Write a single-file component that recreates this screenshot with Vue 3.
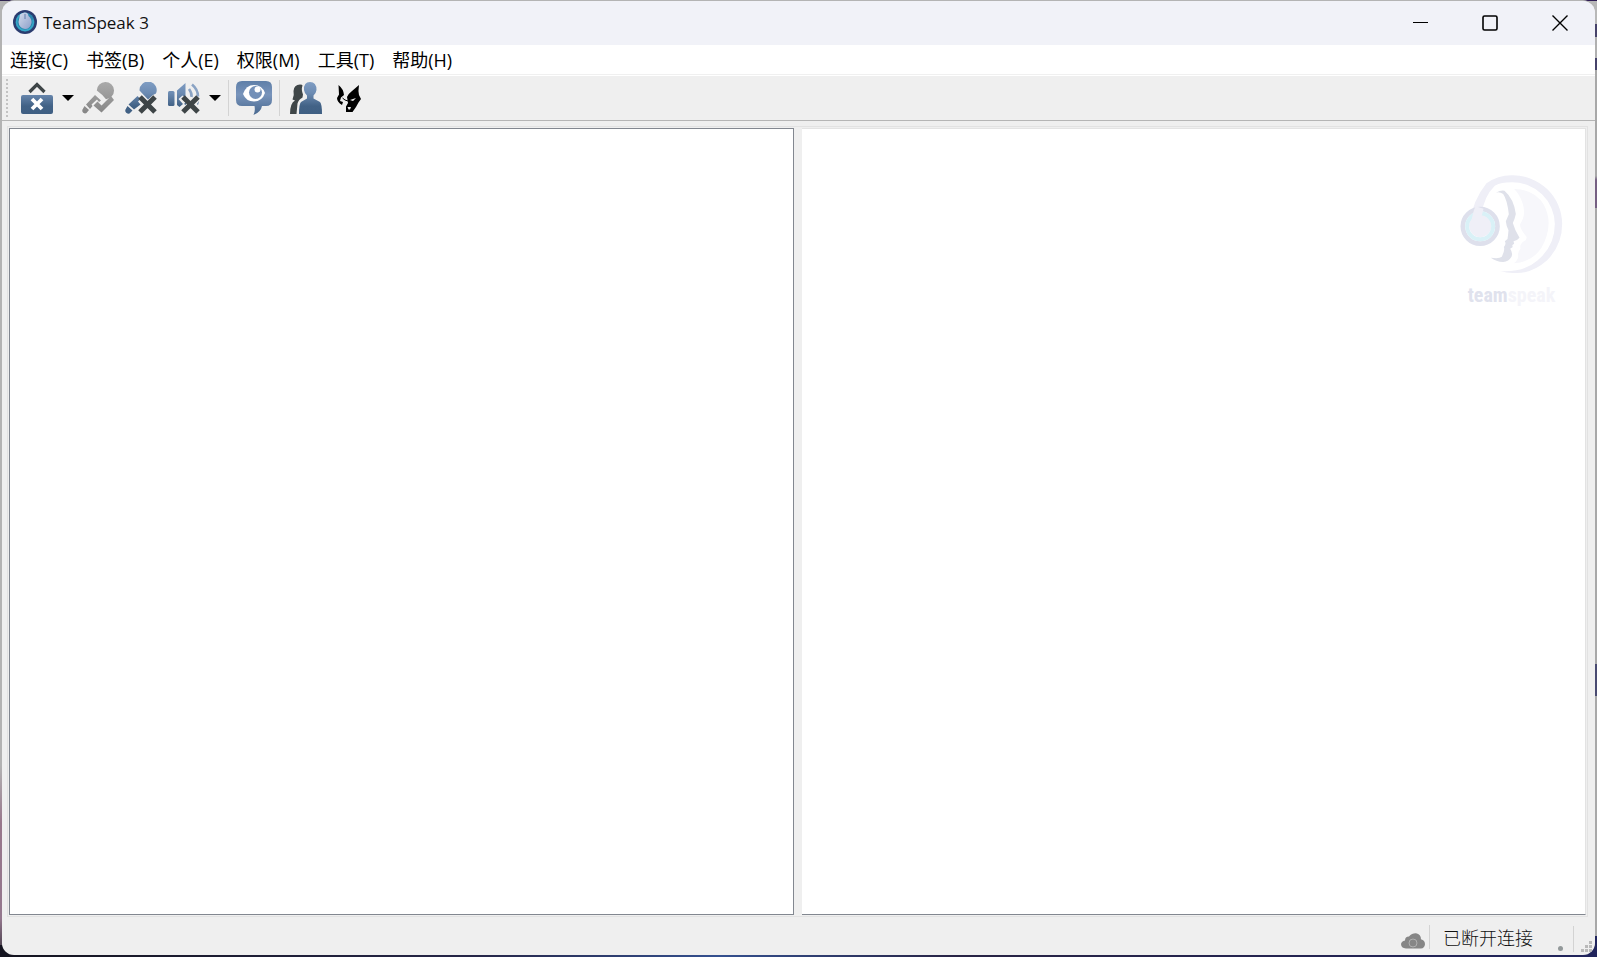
<template>
  <div class="desktop">
    <div class="window">
      <header class="titlebar">
        <svg class="app-icon" viewBox="0 0 24 24">
          <defs>
            <linearGradient id="app-face" x1="0" y1="0" x2="1" y2="1">
              <stop offset="0" stop-color="#d3dcec" />
              <stop offset="1" stop-color="#8d9fca" />
            </linearGradient>
          </defs>
          <circle cx="12" cy="12" r="12" fill="#2b3c70" />
          <circle cx="12" cy="12" r="9.500" fill="#2b87ae" />
          <path d="M12 3.600a8.400 8.400 0 1 0 8 6" fill="none" stroke="#37a8c9" stroke-width="1.500" />
          <path
            d="M7 4.500Q12 1 15 4L15.500 6Q19 9 18.500 13Q17 19 12 19Q6 18 5.500 12Z"
            fill="url(#app-face)"
          />
          <path d="M12 4v5" stroke="#5e7cab" stroke-width="1" />
        </svg>
        <h1 class="title">TeamSpeak 3</h1>
        <div class="window-controls">
          <button type="button" aria-label="最小化">
            <svg viewBox="0 0 16 16"><path d="M1 7.500h15" /></svg>
          </button>
          <button type="button" aria-label="最大化">
            <svg viewBox="0 0 16 16">
              <rect x="1" y="1" width="14" height="14" rx="1.500" class="thick" />
            </svg>
          </button>
          <button type="button" aria-label="关闭">
            <svg viewBox="0 0 16 16"><path d="M.5.500l15 15M15.500.500l-15 15" class="cross" /></svg>
          </button>
        </div>
      </header>

      <nav class="menubar">
        <button v-for="item in menus" :key="item" type="button">{{ item }}</button>
      </nav>

      <div class="toolbar">
        <span class="grip"></span>

        <button type="button" class="tool" aria-label="断开连接">
          <svg viewBox="0 0 32 32">
            <defs>
              <linearGradient id="blue" x1="0" y1="0" x2="0" y2="32" gradientUnits="userSpaceOnUse">
                <stop offset="0" stop-color="#7f9dc3" />
                <stop offset="0.350" stop-color="#6c8bb2" />
                <stop offset="0.750" stop-color="#426286" />
                <stop offset="1" stop-color="#3f5f83" />
              </linearGradient>
              <linearGradient id="bubble" x1="0" y1="0" x2="0" y2="1">
                <stop offset="0" stop-color="#5f7fa8" />
                <stop offset="0.400" stop-color="#7894bb" />
                <stop offset="1" stop-color="#48688f" />
              </linearGradient>
              <linearGradient id="grey" x1="0" y1="0" x2="0" y2="32" gradientUnits="userSpaceOnUse">
                <stop offset="0" stop-color="#aaaaaa" />
                <stop offset="1" stop-color="#858585" />
              </linearGradient>
            </defs>
            <path d="M8.500 10L16 2.500l7.500 7.500" fill="none" stroke="#3e4547" stroke-width="3.200" />
            <rect x="0" y="13" width="32" height="19" rx="2" fill="url(#blue)" />
            <path d="M11 17l10 10M21 17l-10 10" stroke="#fff" stroke-width="3.800" />
          </svg>
        </button>
        <button type="button" class="arrow" aria-label="连接选项">
          <svg viewBox="0 0 12 6"><path d="M0 0h12L6 6z" /></svg>
        </button>

        <button type="button" class="tool" aria-label="激活麦克风">
          <svg viewBox="0 0 32 32" fill="url(#grey)">
            <path d="M14.800 8.500A8.600 8.600 0 1 1 24 17.200Q21 13 14.800 8.500z" />
            <path d="M13 13l6 5.500-2 1.500-2-2.500-5.500 5 1 1.500-2.500 3L4 22.500z" />
            <path d="M2.500 24l4.500 4-2.500 3Q3 32 1.200 30.800-.5 29 .8 27z" />
            <path d="M11.500 23.500l4-4 4 4L29 14l3 4-12.500 12.500z" />
          </svg>
        </button>
        <button type="button" class="tool" aria-label="麦克风静音">
          <svg viewBox="0 0 32 32">
            <g fill="url(#blue)">
              <path d="M14.500 8.500a8.600 8.600 0 1 1 16.500 3l-3 1.500-5 4.500z" />
              <path d="M12.500 14l3 3-2.500 2.500 2.500 3-6.500 5-5.500-5z" />
              <path d="M2.500 24l5 4.500-3 3Q3 32 1.200 30.800-.5 29 .8 27z" />
            </g>
            <path :d="crossPath" class="mute" />
          </svg>
        </button>
        <button type="button" class="tool" aria-label="扬声器静音">
          <svg viewBox="0 0 32 32">
            <g fill="url(#blue)">
              <rect x="0" y="9" width="6.500" height="15" rx="1.500" />
              <path d="M9 8.500L17.500 1v15l-3-2.500-4 3.500 4.500 5-3.500 3L9 23z" />
              <path d="M18 20v3l-2-1z" />
            </g>
            <path
              d="M21 7q3 4 2.500 8M24 2.500q6 5 6 12"
              fill="none"
              stroke="#8aa3c4"
              stroke-width="2.600"
            />
            <path d="M30 23l-1-1 2-3z" fill="#54749a" />
            <path :d="crossPath" class="mute" />
          </svg>
        </button>
        <button type="button" class="arrow" aria-label="扬声器选项">
          <svg viewBox="0 0 12 6"><path d="M0 0h12L6 6z" /></svg>
        </button>

        <span class="separator"></span>

        <button type="button" class="tool wide" aria-label="订阅所有频道">
          <svg viewBox="0 0 36 34">
            <path
              d="M6 0H30Q36 0 36 6V19Q36 25 30 25H26Q25 31 17.500 34Q19.500 30 18.500 25H6Q0 25 0 19V6Q0 0 6 0z"
              fill="url(#bubble)"
            />
            <path d="M7 13Q10 4 18 4T29 12Q26 20.500 18 20.500T7 13z" fill="#fff" />
            <circle cx="19.500" cy="11.500" r="6.500" fill="#7390b8" />
            <circle cx="21.500" cy="8.500" r="3" fill="#fff" />
          </svg>
        </button>

        <span class="separator"></span>

        <button type="button" class="tool" aria-label="联系人">
          <svg viewBox="0 0 32 32">
            <path
              d="M0 32q0-11 5-13.500L2.500 17.500Q4.500 13 3.500 9 4 2.500 10 2.500q2.500 0 2.500 1-1.500 4 .5 9l-.5 3q-4 2-5 6L6.500 32z"
              fill="#3f4648"
            />
            <path
              d="M14 8Q13.500 0 20 0T26.500 8Q26 11.500 23.500 13.500v3L30 20q2 2 2 12H9q0-10 2-12l6-3.500v-3Q14.500 11.500 14 8z"
              fill="url(#blue)"
            />
          </svg>
        </button>
        <button type="button" class="tool" aria-label="Overwolf">
          <svg viewBox="0 0 32 32">
            <path d="M5.500 3q5 4 5.500 10L8 15.500 7 19l3 1-1 3Q4 20 4 16l2-3.500z" />
            <path
              d="M26 3q-1 6 0 10l2 4-2.500 3.500L23 25l-3.500 5H13v-5.500l2-3.500-1-6q1-3 5-6z"
            />
            <path d="M17 18l6-2-3 3zM14.500 25h3.500l-1 2.500h-1.500z" fill="#efefef" />
            <path d="M9.500 16l2.500 2 3 1" stroke="#000" stroke-width="1" fill="none" />
          </svg>
        </button>
      </div>

      <main class="workspace">
        <section class="pane tree-pane" aria-label="服务器"></section>
        <section class="pane info-pane" aria-label="信息">
          <div class="brand">
            <svg class="brand-logo" viewBox="55 35 320 306">
              <path
                d="M88 190Q98 118 140 66Q174 42 215 42A148 147 0 0 1 367 188Q367 250 322 297Q275 339 220 335Q200 335 180 329Q250 334 292 298Q345 255 345 188A128 126 0 0 0 215 63Q185 63 165 73Q132 105 125 160Q155 160 155 195A33 33 0 0 1 88 190z"
                fill="#efeff7"
              />
              <path
                d="M223 83Q285 84 312 130Q336 175 320 225Q298 300 222 306Q236 295 235 282Q233 271 242 262Q238 250 252 240Q262 235 260 226Q238 200 241 188Q260 160 248 125Q240 100 223 83z"
                fill="#f7f7fb"
              />
              <circle cx="121" cy="195" r="52" fill="none" stroke="#dee0ec" stroke-width="14" />
              <circle cx="121" cy="195" r="39" fill="none" stroke="#d9f1f7" stroke-width="12" />
              <path d="M107 135L131 142Q123 165 124 190H93Q98 155 107 135z" fill="#efeff7" />
              <circle cx="121" cy="195" r="32" fill="#efeff7" />
              <path
                d="M168 94Q184 85 194 88Q222 112 228 158Q224 176 219 185Q225 207 239 229Q234 236 221 240L223 247Q214 252 219 257L211 262Q220 275 215 286Q207 300 190 302Q169 301 153 289Q178 293 186 286Q196 265 192 257Q200 248 195 240L203 233Q205 220 206 207Q199 193 198 180L207 159Q202 115 190 98Q180 91 168 94z"
                fill="#dfe1ea"
              />
            </svg>
            <p class="wordmark"><span>team</span>speak</p>
          </div>
        </section>
      </main>

      <footer class="statusbar">
        <svg class="cloud" viewBox="0 0 24 16">
          <path
            d="M5 15.500Q0 15 0 11 .5 8 4 7.500 4 3.500 8 3.500 11 0 15 .2q5 .8 5 6 4 1 4 5-.5 4-4 4.300z"
            fill="#868686"
          />
          <circle cx="12" cy="10" r="4" fill="none" stroke="#b0b0b0" />
        </svg>
        <div class="status-text">已断开连接</div>
        <span class="status-dot"></span>
        <span class="status-grip">
          <svg viewBox="0 0 11 11">
            <path d="M8 0h3v3H8zM4 4h3v3H4zM8 4h3v3H8zM0 8h3v3H0zM4 8h3v3H4zM8 8h3v3H8z" />
          </svg>
        </span>
      </footer>
    </div>
  </div>
</template>

<script setup>
const menus = ["连接(C)", "书签(B)", "个人(E)", "权限(M)", "工具(T)", "帮助(H)"];

// shared by the two muted device icons
const crossPath = "M15 15l15 15M30 15L15 30";
</script>

<style>
body {
  margin: 0;
}
</style>

<style scoped>
.desktop {
  box-sizing: border-box;
  display: flex;
  min-height: 100vh;
  padding: 1px 2px 2px;
  font-family: "Open Sans", "Noto Sans CJK SC", sans-serif;
  background:
    linear-gradient(90deg, #30254f, #4a4468 50%, #2c1a52) top / 100% 1px no-repeat,
    linear-gradient(90deg, #14141f, #262648 30%, #34508f 45%, #282344 60%, #20245c) bottom / 100% 12px no-repeat,
    linear-gradient(#b3b3b3 80%, #98788c 86%, #94788e 96%, #35303a) left / 50% 100% no-repeat,
    linear-gradient(
      #b8b8b8 24px, #46426a 24px 37px, #b0b0b0 37px 58px, #46426a 58px 70px,
      #a8a8a8 70px 176px, #755f82 180px 208px, #a8a8a8 208px 664px,
      #494a71 664px 696px, #a8a8a8 696px 936px, #20245c 936px
    ) right / 50% 100% no-repeat;
}

.window {
  flex: 1;
  display: flex;
  flex-direction: column;
  border-radius: 12px;
  background: #efefef;
  box-shadow: 0 -1px 0 #b4b4b4;
  overflow: hidden;
}

button {
  display: flex;
  align-items: center;
  justify-content: center;
  padding: 0;
  border: 0;
  background: none;
  color: #000;
  font: inherit;
}

.titlebar {
  display: flex;
  align-items: center;
  height: 44px;
  padding-left: 11px;
  background: #f1f2f8;
}

.app-icon {
  width: 24px;
  height: 24px;
  margin-bottom: 2px;
}

.title {
  margin: 0 auto 0 6px;
  font-size: 17px;
  font-weight: 400;
  line-height: 24px;
  color: #111;
}

.window-controls {
  display: flex;
  align-self: stretch;
}

.window-controls button {
  width: 70px;
}

.window-controls svg {
  width: 16px;
  height: 16px;
  fill: none;
  stroke: #000;
}

.window-controls .thick {
  stroke-width: 1.6;
}

.window-controls .cross {
  stroke-width: 1.4;
}

.menubar {
  display: flex;
  gap: 18px;
  height: 29px;
  padding-left: 8px;
  background: #fff;
  border-bottom: 1px solid #f0f0f0;
  font-size: 18px;
  line-height: 24px;
}

.toolbar {
  display: flex;
  align-items: center;
  gap: 1px;
  height: 44px;
  padding-left: 4px;
  border-top: 1px solid #fff;
  border-bottom: 1px solid #b5b5b5;
}

.grip {
  width: 2px;
  height: 38px;
  margin-right: 7px;
  background: repeating-linear-gradient(#c3c3c3 0 2px, transparent 2px 4px);
}

.tool {
  width: 42px;
  height: 40px;
}

.tool svg {
  width: 32px;
  height: 32px;
}

.tool.wide {
  width: 40px;
}

.tool.wide svg {
  width: 36px;
  height: 34px;
}

.arrow {
  width: 17px;
  height: 40px;
}

.arrow svg {
  width: 12px;
  height: 6px;
}

.mute {
  fill: none;
  stroke: #3e4547;
  stroke-width: 5;
}

.separator {
  width: 1px;
  height: 36px;
  margin: 0 4px;
  background: #d3d3d3;
}

.workspace {
  flex: 1;
  display: grid;
  grid-template-columns: 1fr 1fr;
  gap: 8px;
  margin: 5px 7px 0 5px;
  padding: 1px;
  border: 1px solid #e2e2e2;
}

.pane {
  background: #fff;
}

.tree-pane {
  border: 1px solid #828790;
}

.info-pane {
  display: flex;
  justify-content: flex-end;
  align-items: flex-start;
  padding: 44px 20px 0 0;
  border: 1px solid #e3e3e3;
  border-left: 0;
  border-bottom-color: #828790;
}

.brand {
  display: flex;
  flex-direction: column;
  align-items: center;
  gap: 8px;
}

.brand-logo {
  width: 107px;
  height: 102px;
}

.wordmark {
  margin: 0;
  font-family: "Liberation Sans Narrow", "Roboto Condensed", Roboto, sans-serif;
  font-size: 20px;
  font-weight: 700;
  line-height: 24px;
  color: #f4f4f9;
}

.wordmark span {
  color: #e0e2ed;
}

.statusbar {
  display: flex;
  align-items: center;
  justify-content: flex-end;
  height: 38px;
}

.cloud {
  width: 24px;
  height: 16px;
  margin-top: 10px;
}

.status-text {
  margin: 2px 0 0 4px;
  padding-left: 13px;
  border-left: 1px solid #d3d3d3;
  font-family: "Noto Sans CJK SC", sans-serif;
  font-size: 18px;
  font-weight: 300;
  line-height: 24px;
  color: #111;
}

.status-dot {
  width: 5px;
  height: 5px;
  margin: 24px 10px 0 25px;
  border-radius: 50%;
  background: #93999a;
}

.status-grip {
  display: flex;
  align-items: flex-end;
  justify-content: flex-end;
  width: 18px;
  height: 26px;
  margin-top: 6px;
  padding-right: 3px;
  border-left: 1px solid #d3d3d3;
}

.status-grip svg {
  width: 11px;
  height: 11px;
  fill: #b9b9b9;
}
</style>
